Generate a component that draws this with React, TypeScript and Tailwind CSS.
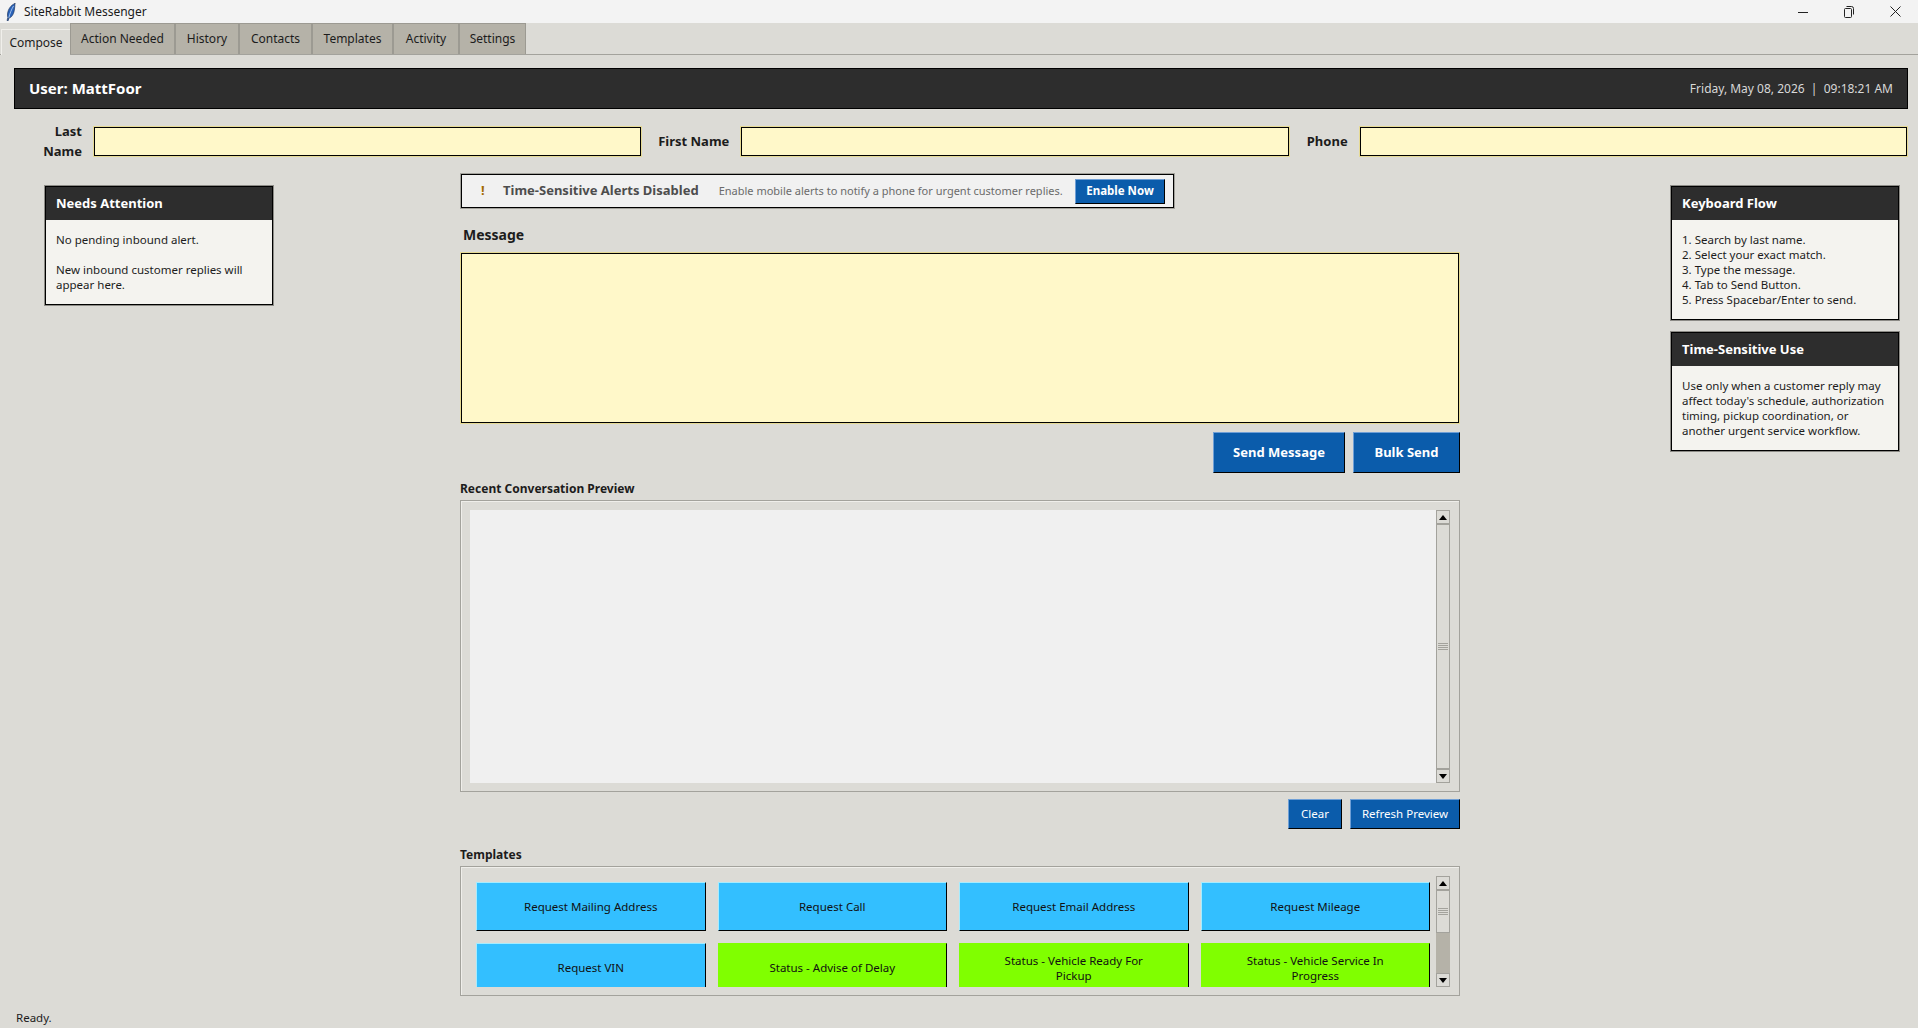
import React from "react";

const tabs = ["Action Needed", "History", "Contacts", "Templates", "Activity", "Settings"];
const tabWidths = ["w-[105px]", "w-[64px]", "w-[73px]", "w-[81px]", "w-[66px]", "w-[67px]"];

function Input() {
    return (
        <div className="flex-1 border border-[#e6da94]">
            <input className="block w-full h-[29px] border border-black bg-[#fff8c9] outline-none" />
        </div>
    );
}

function SidePanel({ title, className, children }: { title: string; className?: string; children: React.ReactNode }) {
    return (
        <div className={`border border-[#8c8b86] ${className ?? ""}`}>
            <div className="border border-black bg-[#f4f3ef]">
                <div className="h-[33px] bg-[#2d2d2d] pl-[10px] flex items-center text-white text-[13px] font-bold">{title}</div>
                <div className="px-[10px] pt-[12px] pb-[12px] text-[11.5px] leading-[15px] text-[#1c1c1c]">{children}</div>
            </div>
        </div>
    );
}

function BlueButton({ className, children }: { className?: string; children: React.ReactNode }) {
    return (
        <button className={`bg-[#0b5cab] text-white border-t border-l border-t-[#6f9fd6] border-l-[#6f9fd6] border-r border-b border-r-black border-b-black flex items-center justify-center ${className ?? ""}`}>
            {children}
        </button>
    );
}

function ArrowButton({ up }: { up?: boolean }) {
    return (
        <div className="h-[14px] shrink-0 bg-[#dcdbd6] border border-[#a3a29c] flex items-center justify-center">
            <svg width="8" height="5" viewBox="0 0 8 5">
                <polygon points={up ? "4,0 8,5 0,5" : "0,0 8,0 4,5"} fill="#000" />
            </svg>
        </div>
    );
}

function Grip() {
    return (
        <div className="flex flex-col gap-[1px]">
            <div className="h-[1px] bg-[#a3a29c]" />
            <div className="h-[1px] bg-[#a3a29c]" />
            <div className="h-[1px] bg-[#a3a29c]" />
            <div className="h-[1px] bg-[#a3a29c]" />
        </div>
    );
}

function TemplateButton({ color, children }: { color: "blue" | "green"; children: React.ReactNode }) {
    const colors = color === "blue"
        ? "bg-[#33bfff] border-t-[#a5ecff] border-l-[#a5ecff]"
        : "bg-[#80ff00] border-t-[#80ff00] border-l-[#80ff00]";
    return (
        <div className={`h-[49px] border-t border-l border-r border-b border-r-black border-b-black flex items-center justify-center text-center text-[11.5px] leading-[15px] text-[#111] ${colors}`}>
            <span>{children}</span>
        </div>
    );
}

export default function App() {
    return (
        <div className="h-screen w-full flex flex-col overflow-hidden bg-[#dcdbd6] font-['Noto_Sans',sans-serif] text-[#1c1c1c]">
            {/* title bar */}
            <div className="h-[23px] shrink-0 bg-[#f3f3f3] flex items-center">
                <svg className="ml-[6px]" width="10" height="18" viewBox="0 0 10 18">
                    <path d="M9 0.5C5 2 2 6 1.5 11c-.1 1.5 0 2.5.4 3.4L1 17.5l1.2.2.7-2.7c2.8-.5 4.6-3.6 5.4-7.5.4-2.4.6-5 .7-7.5z" fill="#2a62b8" stroke="#12294f" strokeWidth="0.6" />
                    <path d="M7.5 3C5.5 6.5 3.8 10.5 2.8 14.8" stroke="#bcd6f5" strokeWidth="0.8" fill="none" />
                </svg>
                <span className="ml-[8px] text-[12px] text-[#1a1a1a]">SiteRabbit Messenger</span>
                <div className="ml-auto flex">
                    <div className="w-[46px] h-[23px] flex items-center justify-center">
                        <svg width="10" height="10" viewBox="0 0 10 10"><path d="M0 5.5h10" stroke="#222" strokeWidth="1" /></svg>
                    </div>
                    <div className="w-[46px] h-[23px] flex items-center justify-center">
                        <svg width="10" height="12" viewBox="0 0 10 12" fill="none" stroke="#222" strokeWidth="1">
                            <rect x="0.5" y="2.5" width="7" height="9" rx="1" />
                            <path d="M2.5 0.5h5a2 2 0 0 1 2 2v6" />
                        </svg>
                    </div>
                    <div className="w-[46px] h-[23px] flex items-center justify-center">
                        <svg width="11" height="11" viewBox="0 0 11 11"><path d="M0.5 0.5l10 10M10.5 0.5l-10 10" stroke="#222" strokeWidth="1" /></svg>
                    </div>
                </div>
            </div>

            {/* tabs */}
            <div className="h-[32px] shrink-0 flex items-end border-b border-[#a3a29c] pl-[1px] text-[12px]">
                <div className="w-[69px] h-[26px] -mb-px bg-[#dcdbd6] border-t border-l border-[#f0efeb] flex items-center justify-center">Compose</div>
                {tabs.map((t, i) => (
                    <div key={t} className={`${tabWidths[i]} h-[31px] bg-[#b5b2a8] border-t border-l border-r border-[#9c9a92] flex items-center justify-center`}>{t}</div>
                ))}
            </div>

            <div className="flex-1 flex flex-col px-[10px] pl-[14px]">
                {/* user header */}
                <div className="mt-[13px] h-[41px] shrink-0 bg-[#2d2d2d] border border-black flex items-center justify-between pl-[14px] pr-[14px] text-white">
                    <span className="text-[15px] font-bold">User: MattFoor</span>
                    <span className="text-[12px] text-[#d8d8d8]">Friday, May 08, 2026&nbsp; |&nbsp; 09:18:21 AM</span>
                </div>

                {/* search fields */}
                <div className="mt-[13px] flex items-center text-[13px] font-bold">
                    <label className="w-[79px] pr-[11px] text-right">Last Name</label>
                    <Input />
                    <label className="w-[98px] pr-[11px] text-right">First Name</label>
                    <Input />
                    <label className="w-[69px] pr-[11px] text-right">Phone</label>
                    <Input />
                </div>

                {/* three columns */}
                <div className="mt-[12px] grid grid-cols-[446px_1000px_1fr]">
                    <div className="pl-[30px] pt-[12px]">
                        <SidePanel title="Needs Attention" className="w-[230px]">
                            <p>No pending inbound alert.</p>
                            <p className="mt-[15px]">New inbound customer replies will<br />appear here.</p>
                        </SidePanel>
                    </div>

                    <div>
                        {/* alert banner */}
                        <div className="w-[715px] h-[36px] border border-[#a3a29c]">
                            <div className="h-full bg-[#f1f1f1] border border-black flex items-center pl-[19px] pr-[8px]">
                                <span className="w-[22px] text-[13px] font-bold text-[#a36a00]">!</span>
                                <span className="text-[13px] font-bold text-[#4d4d4d]">Time-Sensitive Alerts Disabled</span>
                                <span className="ml-[20px] text-[11px] text-[#6b6b6b]">Enable mobile alerts to notify a phone for urgent customer replies.</span>
                                <BlueButton className="ml-auto w-[90px] h-[25px] text-[11.5px] font-bold">Enable Now</BlueButton>
                            </div>
                        </div>

                        <div className="h-[43px] pl-[3px] pt-[15px] text-[14px] font-bold leading-[22px]">Message</div>
                        <div className="border border-[#e6da94] w-[1000px]">
                            <textarea className="block w-full h-[170px] border border-black bg-[#fff8c9] outline-none resize-none" />
                        </div>

                        <div className="mt-[8px] flex justify-end gap-[8px] text-[13px] font-bold">
                            <BlueButton className="w-[132px] h-[41px]">Send Message</BlueButton>
                            <BlueButton className="w-[107px] h-[41px]">Bulk Send</BlueButton>
                        </div>

                        <div className="h-[27px] pt-[8px] text-[12px] font-bold leading-[16px]">Recent Conversation Preview</div>

                        {/* preview frame */}
                        <div className="h-[292px] border border-[#a3a29c] shadow-[inset_1px_1px_0_#efeeea] flex pl-[9px] pr-[9px] pt-[9px] pb-[8px]">
                            <div className="flex-1 bg-[#f0f0f0]" />
                            <div className="w-[14px] flex flex-col bg-[#dcdbd6]">
                                <ArrowButton up />
                                <div className="flex-1 border border-[#a3a29c] flex items-center justify-center px-[1px]">
                                    <div className="w-full"><Grip /></div>
                                </div>
                                <ArrowButton />
                            </div>
                        </div>

                        <div className="mt-[7px] flex justify-end gap-[8px] text-[11.5px]">
                            <BlueButton className="w-[54px] h-[30px]">Clear</BlueButton>
                            <BlueButton className="w-[110px] h-[30px]">Refresh Preview</BlueButton>
                        </div>

                        <div className="h-[37px] pt-[18px] text-[12px] font-bold leading-[16px]">Templates</div>

                        {/* templates frame */}
                        <div className="h-[130px] border border-[#a3a29c] shadow-[inset_1px_1px_0_#efeeea] flex pl-[15px] pr-[9px] pt-[9px]">
                            <div className="flex-1 h-[111px] overflow-hidden pt-[6px] pr-[6px]">
                                <div className="grid grid-cols-4 gap-[12px]">
                                    <TemplateButton color="blue">Request Mailing Address</TemplateButton>
                                    <TemplateButton color="blue">Request Call</TemplateButton>
                                    <TemplateButton color="blue">Request Email Address</TemplateButton>
                                    <TemplateButton color="blue">Request Mileage</TemplateButton>
                                    <TemplateButton color="blue">Request VIN</TemplateButton>
                                    <TemplateButton color="green">Status - Advise of Delay</TemplateButton>
                                    <TemplateButton color="green">Status - Vehicle Ready For<br />Pickup</TemplateButton>
                                    <TemplateButton color="green">Status - Vehicle Service In<br />Progress</TemplateButton>
                                </div>
                            </div>
                            <div className="w-[14px] h-[111px] flex flex-col bg-[#b5b2a8]">
                                <ArrowButton up />
                                <div className="h-[43px] shrink-0 bg-[#dcdbd6] border border-[#a3a29c] flex items-center px-[1px]">
                                    <div className="w-full"><Grip /></div>
                                </div>
                                <div className="flex-1" />
                                <ArrowButton />
                            </div>
                        </div>
                    </div>

                    <div className="pl-[210px] pt-[12px] flex flex-col gap-[10px] items-start">
                        <SidePanel title="Keyboard Flow" className="w-[230px]">
                            1. Search by last name.<br />
                            2. Select your exact match.<br />
                            3. Type the message.<br />
                            4. Tab to Send Button.<br />
                            5. Press Spacebar/Enter to send.
                        </SidePanel>
                        <SidePanel title="Time-Sensitive Use" className="w-[230px]">
                            Use only when a customer reply may<br />
                            affect today's schedule, authorization<br />
                            timing, pickup coordination, or<br />
                            another urgent service workflow.
                        </SidePanel>
                    </div>
                </div>

                <div className="mt-[14px] pl-[2px] text-[11.5px] leading-[16px]">Ready.</div>
            </div>
        </div>
    );
}
